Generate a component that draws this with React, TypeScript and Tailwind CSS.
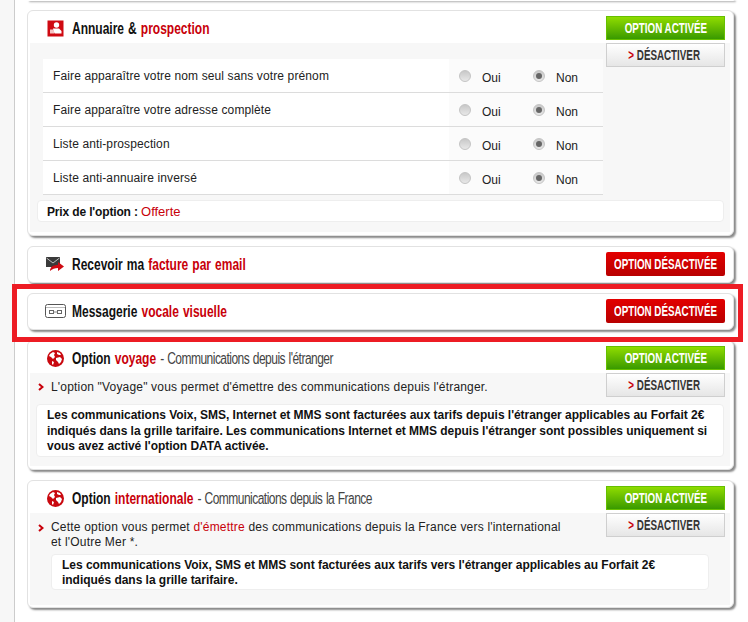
import type { ReactNode } from "react";

function AddressIcon() {
  return (
    <svg width="17" height="17" viewBox="0 0 17 17" className="block">
      <rect x="0.500" y="0.500" width="16" height="16" fill="#cf0a12" />
      <circle cx="9.500" cy="5" r="2.700" fill="#fff" />
      <path d="M6 8.500h6l2.500 2.500v2.500H8L6.500 12z" fill="#fff" />
      <path d="M3 9.500h3.500l1 4H3z" fill="#f4c4c4" />
    </svg>
  );
}

function MailIcon() {
  return (
    <svg width="19" height="15" viewBox="0 0 19 15" className="block">
      <rect x="0" y="0" width="14" height="10" fill="#3a3a3a" />
      <path d="M0.500 1l6.500 5 6.500-5" fill="none" stroke="#bdbdbd" strokeWidth="1" />
      <path d="M4 14c0-4 3-6 8-6V5l6 4.500-6 4.500v-3c-3 0-6 1-8 3z" fill="#cf0a12" />
    </svg>
  );
}

function VoicemailIcon() {
  return (
    <svg width="21" height="14" viewBox="0 0 21 14" className="block">
      <rect x="0.500" y="0.500" width="20" height="13" rx="2" fill="#fff" stroke="#555" />
      <path d="M1 3.500h19" stroke="#bbb" />
      <rect x="4.500" y="6.500" width="4" height="3" fill="none" stroke="#666" />
      <rect x="12.500" y="6.500" width="4" height="3" fill="none" stroke="#666" />
      <path d="M8.500 8h4" stroke="#888" />
    </svg>
  );
}

function GlobeIcon() {
  return (
    <svg width="17" height="17" viewBox="0 0 17 17" className="block">
      <circle cx="8.500" cy="8.500" r="8.500" fill="#c9080f" />
      <path d="M3 4l3-2 2 1-1 2 1 2-2 2-2-2-2-1z" fill="#fff" />
      <path d="M10 2l3 1 1 2-2 0-2-1z" fill="#fff" />
      <path d="M9 8l4-1 2 2-1 3-2 2-1-2-2-2z" fill="#fff" />
      <path d="M5 11l2 1-1 3-1-1z" fill="#fff" />
    </svg>
  );
}

function Red({ children }: { children: ReactNode }) {
  return <span className="text-[#c8000a]">{children}</span>;
}

// condensed look of the original image titles: no narrow font is installed, so squeeze Liberation Sans
function Title({ children }: { children: ReactNode }) {
  return (
    <div className="origin-left scale-x-[0.75] whitespace-nowrap pt-[1px] text-[16px] leading-[20px] font-bold text-[#111] [word-spacing:1px]">
      {children}
    </div>
  );
}

function ButtonLabel({ children }: { children: ReactNode }) {
  return <span className="inline-block scale-x-[0.7] whitespace-nowrap text-[14px] font-bold">{children}</span>;
}

function StatusButton({ on }: { on: boolean }) {
  return on ? (
    <div className="flex h-[24px] w-[119px] shrink-0 items-center justify-center border border-[#66c000] bg-gradient-to-b from-[#8fdc00] to-[#389a00] text-white">
      <ButtonLabel>OPTION ACTIVÉE</ButtonLabel>
    </div>
  ) : (
    <div className="flex h-[24px] w-[119px] shrink-0 items-center justify-center rounded-[2px] bg-gradient-to-b from-[#e30000] to-[#b80000] text-white">
      <ButtonLabel>OPTION DÉSACTIVÉE</ButtonLabel>
    </div>
  );
}

function DisableButton() {
  return (
    <div className="flex h-[24px] w-[119px] shrink-0 items-center justify-center border border-[#cfcfcf] bg-gradient-to-b from-[#ffffff] to-[#e6e6e6] pr-[3px] text-[#333]">
      <ButtonLabel>
        <span className="text-[#c8000a]">&gt;</span> DÉSACTIVER
      </ButtonLabel>
    </div>
  );
}

function Card({ icon, title, on, children }: { icon: ReactNode; title: ReactNode; on: boolean; children?: ReactNode }) {
  return (
    <div className="w-[707px] rounded-[6px] border border-[#e2e2e2] bg-white shadow-[2px_2px_2px_#8a8a8a]">
      <div className="flex h-[32px] items-start pl-[17px] pr-[8px] pt-[5px]">
        <div className="mr-[6px] flex h-[24px] w-[21px] shrink-0 items-center justify-center">{icon}</div>
        <div className="flex h-[24px] flex-1 items-center">
          <Title>{title}</Title>
        </div>
        <StatusButton on={on} />
      </div>
      {children ?? <div className="h-[3px]" />}
    </div>
  );
}

function Radio({ checked }: { checked?: boolean }) {
  return (
    <span className="flex h-[12px] w-[12px] shrink-0 items-center justify-center rounded-full border border-[#c4c4c4] bg-gradient-to-b from-[#c8c8c8] to-[#e8e8e8]">
      {checked && <span className="h-[6px] w-[6px] rounded-full bg-[#666]" />}
    </span>
  );
}

const ROWS = [
  "Faire apparaître votre nom seul sans votre prénom",
  "Faire apparaître votre adresse complète",
  "Liste anti-prospection",
  "Liste anti-annuaire inversé",
];

function Row({ label }: { label: string }) {
  return (
    <div className="flex h-[34px] border-b border-[#dcdcdc]">
      <div className="flex w-[406px] items-center bg-white pl-[10px] tracking-[0.12px]">{label}</div>
      <div className="flex flex-1 items-center bg-[#fbfbfb] pl-[10px]">
        <Radio />
        <span className="ml-[11px] w-[51px] pt-[4px]">Oui</span>
        <Radio checked />
        <span className="ml-[11px] pt-[4px]">Non</span>
      </div>
    </div>
  );
}

function Arrow() {
  return (
    <svg width="6" height="8" viewBox="0 0 6 8" className="block shrink-0">
      <path d="M1 1l3.500 3L1 7" fill="none" stroke="#c8000a" strokeWidth="2" />
    </svg>
  );
}

export default function App() {
  return (
    <div className="flex h-[622px] w-[748px] overflow-hidden bg-white font-['Liberation_Sans',Arial,sans-serif] text-[12px] text-[#222]">
      <div className="h-full w-[15px] shrink-0 border-r border-[#cccccc] bg-[#f7f7f7]" />
      <div className="relative flex-1 pl-[12px]">
        <div className="h-[1px] w-[707px] rounded-b-[4px] shadow-[2px_1px_2px_#8a8a8a]" />
        <div className="mt-[9px] flex flex-col gap-[10px]">
          <Card on icon={<AddressIcon />} title={<>Annuaire &amp; <Red>prospection</Red></>}>
            <div className="mb-[3px] ml-[2px] mr-[3px] bg-[#f7f7f7] pb-[10px]">
              <div className="flex">
                <div className="ml-[13px] w-[560px] pt-[16px]">
                  {ROWS.map((r) => (
                    <Row key={r} label={r} />
                  ))}
                </div>
                <div className="ml-[3px]">
                  <DisableButton />
                </div>
              </div>
              <div className="ml-[7px] mr-[6px] mt-[5px] flex h-[22px] items-center rounded-[4px] border border-[#eeeeee] bg-white pl-[9px] pt-[1px] font-bold tracking-[-0.15px] text-[#111]">
                Prix de l'option :&nbsp;<span className="text-[13px] font-normal tracking-normal text-[#c8000a]">Offerte</span>
              </div>
            </div>
          </Card>

          <Card on={false} icon={<MailIcon />} title={<>Recevoir ma <Red>facture par email</Red></>} />
          <Card on={false} icon={<VoicemailIcon />} title={<>Messagerie <Red>vocale visuelle</Red></>} />

          <Card
            on
            icon={<GlobeIcon />}
            title={<>Option <Red>voyage</Red> <span className="font-normal tracking-[-0.7px] text-[#444]">- Communications depuis l'étranger</span></>}
          >
            <div className="mb-[3px] ml-[2px] mr-[3px] bg-[#f7f7f7] pb-[9px]">
              <div className="flex">
                <div className="flex w-[576px] items-center gap-[7px] pl-[8px] pt-[3px] tracking-[0.18px]">
                  <Arrow />
                  <span>L'option "Voyage" vous permet d'émettre des communications depuis l'étranger.</span>
                </div>
                <DisableButton />
              </div>
              <div className="ml-[6px] mr-[6px] mt-[7px] rounded-[4px] border border-[#eeeeee] bg-white px-[10px] pb-[1.5px] pt-[3px] font-bold leading-[15.5px] tracking-[-0.03px] text-[#111]">
                Les communications Voix, SMS, Internet et MMS sont facturées aux tarifs depuis l'étranger applicables au Forfait 2€ indiqués dans la grille tarifaire. Les communications Internet et MMS depuis l'étranger sont possibles uniquement si vous avez activé l'option DATA activée.
              </div>
            </div>
          </Card>

          <Card
            on
            icon={<GlobeIcon />}
            title={<>Option <Red>internationale</Red> <span className="font-normal tracking-[-0.7px] text-[#444]">- Communications depuis la France</span></>}
          >
            <div className="mb-[2px] ml-[2px] mr-[3px] bg-[#f7f7f7] pb-[15px]">
              <div className="flex">
                <div className="flex w-[576px] gap-[7px] pl-[8px] pt-[7px] leading-[15px] tracking-[0.2px]">
                  <span className="pt-[4px]"><Arrow /></span>
                  <span className="whitespace-nowrap">
                    Cette option vous permet <Red>d'émettre</Red> des communications depuis la France vers l'international
                    <br />
                    et l'Outre Mer *.
                  </span>
                </div>
                <DisableButton />
              </div>
              <div className="ml-[21px] mr-[21px] mt-[4px] rounded-[4px] border border-[#eeeeee] bg-white px-[10px] pb-[1px] pt-[3px] font-bold leading-[15px] tracking-[-0.03px] text-[#111]">
                Les communications Voix, SMS et MMS sont facturées aux tarifs vers l'étranger applicables au Forfait 2€
                <br />
                indiqués dans la grille tarifaire.
              </div>
            </div>
          </Card>
        </div>
        {/* red highlight drawn over the voicemail card */}
        <div className="pointer-events-none absolute left-[-3px] top-[284px] h-[58px] w-[731px] border-[5px] border-[#ed1c24]" />
      </div>
    </div>
  );
}
